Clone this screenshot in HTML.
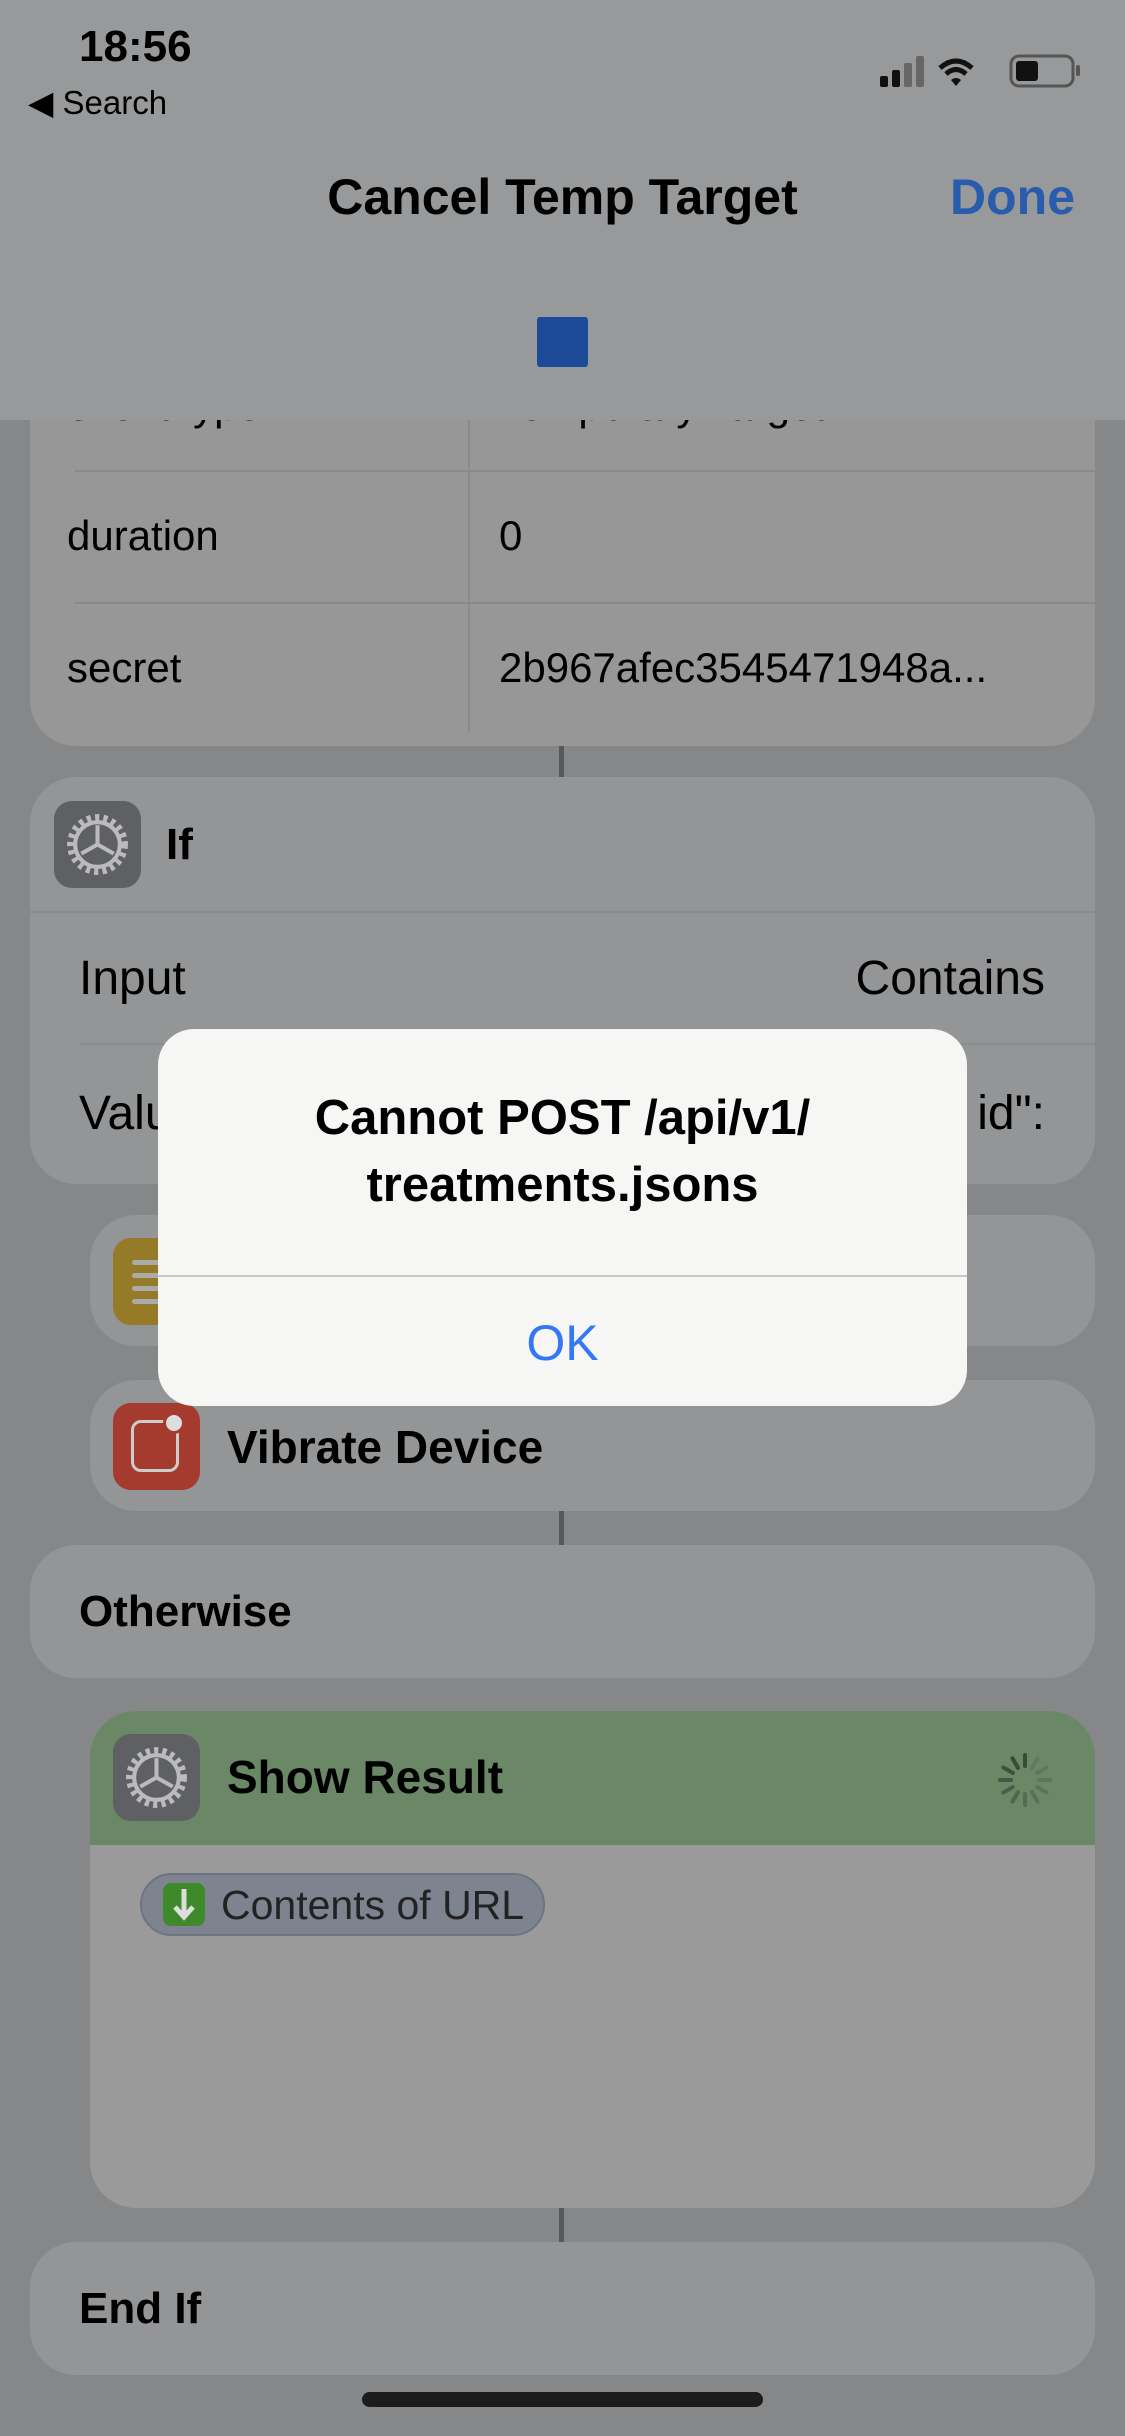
<!DOCTYPE html>
<html><head><meta charset="utf-8"><style>
*{margin:0;padding:0;box-sizing:border-box}
body{width:1125px;height:2436px;background:#868788;position:relative;overflow:hidden;font-family:"Liberation Sans",sans-serif;color:#000}
.a{position:absolute}
.card{position:absolute;background:#949596;border-radius:46px}
.t{position:absolute;font-size:44px;line-height:1;white-space:nowrap}
.line{position:absolute;left:559px;width:5px;background:#58595a}
.icon{position:absolute;width:87px;height:87px;border-radius:18px}
</style></head><body>
<div class="line" style="top:740px;height:45px"></div>
<div class="line" style="top:1505px;height:45px"></div>
<div class="line" style="top:2200px;height:45px"></div>

<!-- card 1 -->
<div class="card" style="left:30px;top:300px;width:1065px;height:446px;background:#979798"></div>
<div class="a" style="left:75px;top:470px;width:1020px;height:2px;background:#898a8b"></div>
<div class="a" style="left:75px;top:602px;width:1020px;height:2px;background:#898a8b"></div>
<div class="a" style="left:468px;top:380px;width:2px;height:353px;background:#898a8b"></div>
<div class="t" style="left:67px;top:385px;font-size:42px">eventType</div>
<div class="t" style="left:499px;top:385px;font-size:42px">Temporary Target</div>
<div class="t" style="left:67px;top:515px;font-size:42px">duration</div>
<div class="t" style="left:499px;top:515px;font-size:42px">0</div>
<div class="t" style="left:67px;top:647px;font-size:42px">secret</div>
<div class="t" style="left:499px;top:647px;font-size:42px">2b967afec3545471948a...</div>

<!-- header -->
<div class="a" style="left:0;top:0;width:1125px;height:420px;background:#98999a"></div>
<div class="t" style="left:79px;top:25px;font-size:44px;font-weight:bold">18:56</div>
<div class="t" style="left:28px;top:86px;font-size:33px">&#9664; Search</div>
<svg class="a" style="left:880px;top:52px" width="210" height="40" viewBox="0 0 210 40">
<rect x="0" y="24" width="8" height="11" rx="2" fill="#111"/><rect x="12" y="18" width="8" height="17" rx="2" fill="#111"/><rect x="24" y="11" width="8" height="24" rx="2" fill="#666"/><rect x="36" y="4" width="8" height="31" rx="2" fill="#666"/>
<path d="M60 16 Q76 2 92 16" stroke="#111" stroke-width="5" fill="none"/><path d="M66 22 Q76 13 86 22" stroke="#111" stroke-width="5" fill="none"/><path d="M71 28 L76 34 L81 28 Q76 24 71 28Z" fill="#111"/>
<rect x="131" y="4" width="62" height="30" rx="8" fill="none" stroke="#555" stroke-width="3"/><rect x="136" y="9" width="22" height="20" rx="3" fill="#111"/><rect x="196" y="13" width="4" height="11" rx="2" fill="#555"/>
</svg>
<div class="t" style="left:0;width:1125px;text-align:center;top:172px;font-size:50px;font-weight:bold">Cancel Temp Target</div>
<div class="t" style="right:50px;top:172px;font-size:50px;font-weight:bold;color:#2a5cad">Done</div>
<div class="a" style="left:537px;top:317px;width:51px;height:50px;background:#1d4a98;border-radius:3px"></div>

<!-- If card -->
<div class="card" style="left:30px;top:777px;width:1065px;height:407px"></div>
<div class="a" style="left:30px;top:911px;width:1065px;height:2px;background:#8a8b8c"></div>
<div class="a" style="left:79px;top:1043px;width:1016px;height:2px;background:#8a8b8c"></div>
<div class="icon" style="left:54px;top:801px;background:#5f6063"></div>
<svg class="a" style="left:62px;top:809px" width="71" height="71" viewBox="0 0 70 70"><circle cx="35" cy="35" r="26" fill="none" stroke="#bbb" stroke-width="8" stroke-dasharray="4 4"/><circle cx="35" cy="35" r="22" fill="none" stroke="#bbb" stroke-width="4"/><path d="M35 35 L35 16 M35 35 L19 44 M35 35 L51 44" stroke="#bbb" stroke-width="4"/></svg>
<div class="t" style="left:166px;top:823px;font-weight:bold">If</div>
<div class="t" style="left:79px;top:955px;font-size:48px">Input</div>
<div class="t" style="right:80px;top:955px;font-size:48px">Contains</div>
<div class="t" style="left:79px;top:1090px;font-size:48px">Valu</div>
<div class="t" style="right:80px;top:1090px;font-size:48px">id":</div>

<!-- text card -->
<div class="card" style="left:90px;top:1215px;width:1005px;height:131px"></div>
<div class="icon" style="left:113px;top:1238px;background:#957b27"></div>
<div class="a" style="left:132px;top:1260px;width:50px;height:5px;background:#aaa;border-radius:3px;box-shadow:0 13px 0 #aaa,0 26px 0 #aaa,0 39px 0 #aaa"></div>

<!-- vibrate -->
<div class="card" style="left:90px;top:1380px;width:1005px;height:131px"></div>
<div class="icon" style="left:113px;top:1403px;background:#a53a2e"></div>
<div class="a" style="left:131px;top:1420px;width:48px;height:52px;border:3px solid #ccc;border-radius:10px"></div>
<div class="a" style="left:163px;top:1412px;width:22px;height:22px;border-radius:50%;background:#ddd;border:3px solid #a53a2e"></div>
<div class="t" style="left:227px;top:1424px;font-size:46px;font-weight:bold">Vibrate Device</div>

<!-- otherwise -->
<div class="card" style="left:30px;top:1545px;width:1065px;height:133px"></div>
<div class="t" style="left:79px;top:1590px;font-weight:bold">Otherwise</div>

<!-- show result -->
<div class="card" style="left:90px;top:1711px;width:1005px;height:497px;background:#9a9a9a;overflow:hidden">
<div class="a" style="left:0;top:0;width:1005px;height:134px;background:#6a8866"></div></div>
<div class="icon" style="left:113px;top:1734px;background:#5f6063"></div>
<svg class="a" style="left:121px;top:1742px" width="71" height="71" viewBox="0 0 70 70"><circle cx="35" cy="35" r="26" fill="none" stroke="#bbb" stroke-width="8" stroke-dasharray="4 4"/><circle cx="35" cy="35" r="22" fill="none" stroke="#bbb" stroke-width="4"/><path d="M35 35 L35 16 M35 35 L19 44 M35 35 L51 44" stroke="#bbb" stroke-width="4"/></svg>
<div class="t" style="left:227px;top:1754px;font-size:46px;font-weight:bold">Show Result</div>
<svg class="a" style="left:995px;top:1750px" width="60" height="60" viewBox="-30 -30 60 60">
<g stroke-width="4" stroke-linecap="round">
<line x1="0" y1="-14" x2="0" y2="-25" stroke="#3a4a3a"/>
<line x1="0" y1="-14" x2="0" y2="-25" stroke="#3a4a3a" transform="rotate(-30)"/>
<line x1="0" y1="-14" x2="0" y2="-25" stroke="#405040" transform="rotate(-60)"/>
<line x1="0" y1="-14" x2="0" y2="-25" stroke="#455845" transform="rotate(-90)"/>
<line x1="0" y1="-14" x2="0" y2="-25" stroke="#4a5e4a" transform="rotate(-120)"/>
<line x1="0" y1="-14" x2="0" y2="-25" stroke="#4f654f" transform="rotate(-150)"/>
<line x1="0" y1="-14" x2="0" y2="-25" stroke="#546b54" transform="rotate(180)"/>
<line x1="0" y1="-14" x2="0" y2="-25" stroke="#587058" transform="rotate(150)"/>
<line x1="0" y1="-14" x2="0" y2="-25" stroke="#5a745a" transform="rotate(120)"/>
<line x1="0" y1="-14" x2="0" y2="-25" stroke="#5c765c" transform="rotate(90)"/>
<line x1="0" y1="-14" x2="0" y2="-25" stroke="#5e785e" transform="rotate(60)"/>
<line x1="0" y1="-14" x2="0" y2="-25" stroke="#607a60" transform="rotate(30)"/>
</g></svg>
<div class="a" style="left:140px;top:1873px;width:405px;height:63px;border-radius:32px;background:#7d8490;border:2px solid #6e7480"></div>
<div class="a" style="left:163px;top:1883px;width:42px;height:43px;border-radius:8px;background:#3e8a2a"></div>
<svg class="a" style="left:163px;top:1883px" width="42" height="43" viewBox="0 0 42 43"><path d="M21 6 V32 M12 24 L21 34 L30 24" stroke="#ddd" stroke-width="5" fill="none"/></svg>
<div class="t" style="left:221px;top:1885px;font-size:41px;color:#222">Contents of URL</div>

<!-- end if -->
<div class="card" style="left:30px;top:2242px;width:1065px;height:133px"></div>
<div class="t" style="left:79px;top:2287px;font-weight:bold">End If</div>
<div class="a" style="left:362px;top:2392px;width:401px;height:15px;border-radius:8px;background:#1c1c1c"></div>

<!-- alert -->
<div class="a" style="left:158px;top:1029px;width:809px;height:377px;border-radius:36px;background:#f6f6f4"></div>
<div class="a" style="left:158px;top:1275px;width:809px;height:2px;background:#c8c8c8"></div>
<div class="t" style="left:158px;width:809px;text-align:center;top:1085px;font-size:49px;line-height:67px;white-space:normal;font-weight:bold">Cannot POST /api/v1/<br>treatments.jsons</div>
<div class="t" style="left:158px;width:809px;text-align:center;top:1318px;font-size:50px;color:#3478f6">OK</div>
</body></html>
